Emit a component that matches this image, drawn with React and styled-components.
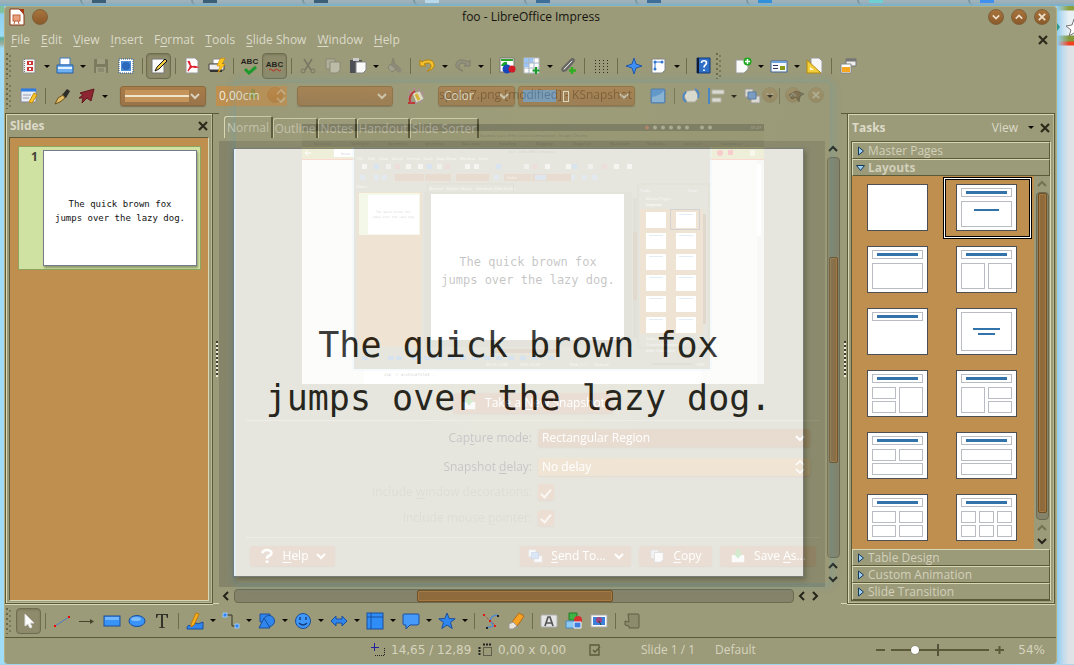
import React from "react";
import styled, { createGlobalStyle, css } from "styled-components";

const c = {
  base: "#9b9a79",
  dark: "#5b5938",
  light: "#d9d8b4",
  text: "#dcdac8",
  orange: "#be8f4f",
};

const Global = createGlobalStyle`
  * { box-sizing: border-box; }
  body { margin: 0; background: #9fd4ef; }
  body, button, input, select {
    font-family: "Open Sans", "Noto Sans", sans-serif;
    font-size: 12px;
    line-height: 16px;
    color: ${c.text};
  }
  button, select, input { margin: 0; padding: 0; border: 0; background: none; }
  h2, p { margin: 0; padding: 0; }
  svg { display: block; flex: none; }
  a { color: inherit; text-decoration: none; }
`;

/* ---------- desktop behind the window ---------- */
const Desktop = styled.div`
  display: flex;
  flex-direction: column;
  min-height: 100vh;
  padding-bottom: 2px;
  background: linear-gradient(90deg, #9fd4ef 0, #9fd4ef 80%, #aed6ea 100%);
`;
const BackTabs = styled.div`
  display: flex;
  height: 6px;
  padding: 0 20px 0 80px;
  background: linear-gradient(#a3b3ba 0, #94aeb9 60%, #6db4d6 100%);
`;
const BackTab = styled.div`
  width: 111px;
  flex: none;
  height: 5px;
  padding-left: 10px;
  border-left: 2px solid #7b97a4;
  border-radius: 0 0 0 6px;
  &::before { content: ""; display: block; width: 14px; height: 3px; background: ${(p) => p.$mark}; }
`;
const Middle = styled.div` display: flex; flex: 1; `;
const LeftEdge = styled.div`
  width: 4px;
  background: linear-gradient(#7fc09a 0, #7fc09a 6px, #8fd0f0 8px, #9adcf6 30px, #5fae9a 32px, #9ab0a0 38px, #9fdcf8 42px);
`;
const RightEdge = styled.div`
  width: 17px;
  padding-top: 11px;
  background:
    linear-gradient(90deg, #8fcdf0 0, rgba(160, 210, 240, 0.5) 6px, transparent 12px),
    linear-gradient(#8da03c 0, #8da03c 4px, #e9f1f4 5px, #e9f1f4 29px, #84993a 30px, #84993a 35px, #f04020 36px, #f04020 39px, #dfe3e8 40px);
`;

/* ---------- window frame ---------- */
const Window = styled.div`
  position: relative;
  display: flex;
  flex-direction: column;
  flex: 1;
  min-width: 0;
  background: ${c.base};
  border: 1px solid #b3ae80;
  border-width: 1px 1px 0 1px;
  border-radius: 4px;
`;
const TitleBar = styled.header`
  display: flex;
  align-items: center;
  gap: 7px;
  height: 20px;
  padding: 0 6px 0 4px;
`;
const Title = styled.div`
  flex: 1;
  text-align: center;
  color: #15150f;
  padding-left: 26px;
`;
const RoundButton = styled.button`
  display: grid;
  place-items: center;
  width: 16px;
  height: 16px;
  border-radius: 8px;
  background: linear-gradient(#a8743d, #8a5a2a);
  border: 1px solid #806038;
`;
const MenuBar = styled.nav`
  display: flex;
  align-items: center;
  height: 26px;
  padding: 0 8px 0 6px;
  gap: 11px;
`;
const Key = styled.span` text-decoration: underline; text-underline-offset: 2px; `;
const Spacer = styled.div` flex: 1; `;
const IconButton = styled.button` display: grid; place-items: center; `;

/* ---------- toolbars ---------- */
const Toolbar = styled.div`
  display: flex;
  align-items: center;
  height: ${(p) => p.$h}px;
  flex: none;
`;
const Grip = styled.div`
  flex: none;
  width: ${(p) => (p.$wide ? 15 : 11)}px;
  height: 26px;
  background:
    radial-gradient(circle at 1px 1px, #6b694c 1px, transparent 1px) 1px 0 / 4px 5px repeat-y,
    radial-gradient(circle at 1px 1px, #7b795a 1px, transparent 1px) 4px 2px / 4px 5px repeat-y;
`;
const Slot = styled.button`
  display: grid;
  place-items: center;
  flex: none;
  width: 25px;
  height: 26px;
  opacity: ${(p) => (p.$faded ? 0.4 : 1)};
  ${(p) => p.$on && css`
    background: #8d8b6b;
    border: 1px solid #6f6d50;
    border-radius: 4px;
    box-shadow: inset 0 1px 2px #7a785a;
  `}
`;
const ArrowSlot = styled.button`
  display: grid;
  place-items: center;
  flex: none;
  width: 11px;
  height: 26px;
  &::before {
    content: "";
    border: 3px solid transparent;
    border-top-color: #0a0a05;
    border-bottom: 0;
  }
`;
const Separator = styled.div`
  flex: none;
  width: 8px;
  height: 16px;
  &::before { content: ""; display: block; width: 1px; height: 16px; margin-left: 4px; background: #6f6d4d; }
`;
const Fields = styled.div`
  display: flex;
  align-items: center;
  gap: ${(p) => p.$gap || 10}px;
  padding: 0 10px;
`;
const Combo = styled.label`
  position: relative;
  display: flex;
  align-items: center;
  width: ${(p) => p.$w}px;
  height: 20px;
  border-radius: 3px;
  border: 1px solid #8c683a;
  background: linear-gradient(#a87c49, #99744a);
  box-shadow: 0 1px 1px #77735a;
  select { appearance: none; width: 100%; height: 18px; padding-left: 5px; color: #eeeadc; }
  svg { position: absolute; right: 5px; }
`;
const Swatch = styled.span`
  position: absolute;
  left: 4px;
  width: ${(p) => p.$w}px;
  height: 12px;
  background: ${(p) => p.$fill};
`;
const Tofu = styled.span`
  position: absolute;
  left: 44px;
  width: 6px;
  height: 11px;
  border: 1px solid #f0ecd8;
`;
const Spin = styled.label`
  display: flex;
  align-items: center;
  width: 71px;
  height: 20px;
  background: ${c.orange};
  input { width: 60px; padding-left: 3px; color: #f0ecdf; }
`;

/* ---------- body ---------- */
const Body = styled.div` display: flex; flex: 1; min-height: 490px; padding-right: 1px; `;
const Panel = styled.section`
  display: flex;
  flex-direction: column;
  flex: none;
  width: ${(p) => p.$w}px;
  padding: 0 3px 2px 3px;
  border: 1px solid ${c.dark};
  box-shadow: inset 1px 1px 0 ${c.light}, inset -1px -1px 0 #b9b892, 0 1px 0 ${c.light};
`;
const PanelHead = styled.div`
  display: flex;
  align-items: center;
  gap: 4px;
  height: ${(p) => p.$h}px;
  flex: none;
  padding: 0 1px;
`;
const PanelTitle = styled.h2` flex: 1; font: 700 12px/16px "Open Sans", sans-serif; `;
const ViewMenu = styled.button` padding-right: 3px; `;
const SlideList = styled.div`
  flex: 1;
  padding: 8px 8px;
  background: ${c.orange};
  border: 1px solid ${c.dark};
  border-color: ${c.dark} ${c.light} ${c.light} ${c.dark};
`;
const SlideItem = styled.button`
  display: flex;
  width: 183px;
  height: 124px;
  padding: 3px 3px 3px 12px;
  background: #d0e2a2;
  border: 1px solid #8fa35f;
  text-align: left;
`;
const SlideNumber = styled.span` width: 12px; flex: none; line-height: 14px; font-weight: 700; color: #45433a; `;
const SlidePreview = styled.span`
  flex: 1;
  height: 116px;
  padding-top: 46px;
  background: #fff;
  border: 1px solid #777a8a;
  box-shadow: 1px 2px 2px #8a9a68;
  font: 9px/14px "DejaVu Sans Mono", monospace;
  text-align: center;
  color: #111;
  white-space: pre-line;
`;
const Splitter = styled.div`
  display: flex;
  flex-direction: column;
  justify-content: center;
  flex: none;
  width: 6px;
  border-top: 1px solid ${c.dark};
  border-bottom: 1px solid ${c.light};
  &::before {
    content: "";
    width: 2px;
    height: 36px;
    margin-left: 3px;
    background: repeating-linear-gradient(#3f3e2c 0, #3f3e2c 2px, #eeedda 2px, #eeedda 4px);
  }
`;
const Center = styled.main` display: flex; flex: 1; flex-direction: column; min-width: 0; `;
const Tabs = styled.div`
  display: flex;
  align-items: flex-end;
  height: 28px;
  padding: 0 5px 3px 5px;
`;
const Tab = styled.button`
  width: ${(p) => p.$w}px;
  height: ${(p) => (p.$active ? 22 : 20)}px;
  color: #d0ceba;
  white-space: nowrap;
  text-align: center;
  border: 1px solid ${c.light};
  border-right: 2px solid #4a482c;
  border-bottom: 0;
  border-radius: 3px 2px 0 0;
`;
const Work = styled.div` display: flex; flex: 1; `;
const Canvas = styled.div`
  display: flex;
  flex: 1;
  padding: 7px 21px 10px 14px;
  background: #86856a;
`;
const Slide = styled.div`
  flex: 1;
  display: flex;
  align-items: center;
  justify-content: center;
  padding-top: 18px;
  background: #fff;
  border: 1px solid #6f7478;
  box-shadow: 2px 3px 5px #5d5c44;
`;
const SlideText = styled.p`
  font: 35px/53px "DejaVu Sans Mono", monospace;
  color: #000;
  text-align: center;
  white-space: pre;
`;
const VBar = styled.div`
  display: flex;
  flex-direction: column;
  align-items: center;
  width: 16px;
  flex: none;
  padding: 3px 0;
  background: ${c.base};
  gap: 3px;
`;
const VTrack = styled.div`
  display: flex;
  flex-direction: column;
  flex: 1;
  width: 13px;
  padding: 0 1px;
  border: 1px solid #6c6a50;
  border-radius: 4px;
  background: #85846a;
`;
const thumb = css`
  border: 1px solid #6f5026;
  border-radius: 2px;
  background: #8f6b3c;
  box-shadow: inset 0 0 0 1px #a67a42;
`;
const VThumb = styled.div`
  ${thumb}
  flex: ${(p) => p.$size};
`;
const VRest = styled.div` flex: ${(p) => p.$size}; `;
const HBar = styled.div`
  display: flex;
  align-items: center;
  height: 17px;
  flex: none;
  padding: 0 21px 0 2px;
  gap: 3px;
`;
const HTrack = styled.div`
  display: flex;
  flex: 1;
  height: 14px;
  border: 1px solid #6c6a50;
  border-radius: 4px;
  background: #85846a;
`;
const HThumb = styled.div` ${thumb} flex: 194; `;
const HRest = styled.div` flex: ${(p) => p.$size}; `;

const Accordion = styled.div`
  display: flex;
  flex-direction: column;
  flex: 1;
  border: 1px solid ${c.dark};
  border-right-color: ${c.light};
`;
const Section = styled.button`
  display: flex;
  align-items: center;
  flex: none;
  gap: 3px;
  height: 17px;
  padding-left: 3px;
  text-align: left;
  border: 1px solid ${c.light};
  border-right-color: ${c.dark};
  border-bottom-color: ${c.dark};
  color: #d2d0ba;
  font-weight: ${(p) => (p.$open ? 700 : 400)};
`;
const LayoutArea = styled.div` display: flex; flex: 1; background: ${c.orange}; `;
const LayoutGrid = styled.div`
  display: grid;
  grid-template-columns: 89px 89px;
  grid-auto-rows: 62px;
  padding: 1px 0 0 2px;
  flex: 1;
`;
const LayoutCell = styled.button`
  display: flex;
  align-items: flex-start;
  padding: ${(p) => (p.$on ? "4px 0 0 10px" : "7px 0 0 13px")};
  ${(p) => p.$on && css`
    border: 3px double #000;
    background: linear-gradient(${c.orange}, ${c.orange}) padding-box, #fff border-box;
  `}
`;

/* ---------- status bar ---------- */
const Status = styled.footer`
  display: flex;
  align-items: center;
  height: 27px;
  flex: none;
  border-top: 1px solid ${c.dark};
  padding: 0 11px 3px 0;
  color: #d6d4be;
`;
const StatusCell = styled.div`
  display: flex;
  align-items: center;
  gap: 6px;
  width: ${(p) => p.$w}px;
  font-family: ${(p) => (p.$num ? '"DejaVu Sans", sans-serif' : "inherit")};
  white-space: nowrap;
`;
const Zoom = styled.input`
  appearance: none;
  width: 98px;
  height: 12px;
  margin: 0 6px;
  background:
    linear-gradient(#55533a, #55533a) 46px 0 / 2px 12px no-repeat,
    linear-gradient(#5b5938, #5b5938) 0 5px / 100% 2px no-repeat;
  &::-webkit-slider-thumb {
    appearance: none;
    width: 8px;
    height: 8px;
    border-radius: 4px;
    background: #fff;
    box-shadow: 0 0 1px #333;
  }
`;

/* ---------- fading snapshot dialog ---------- */
const Ghost = styled.div`
  position: absolute;
  left: 231px;
  right: 226px;
  top: 76px;
  height: 500px;
  padding: 0 10px;
  opacity: 0.25;
  pointer-events: none;
  background: radial-gradient(ellipse at 50% 0, #a8a57c, #9b9a79 60%);
  border-radius: 5px;
  box-shadow: 0 0 8px 3px #4fa3c0;
`;
const GhostTitle = styled.div`
  display: flex;
  align-items: center;
  gap: 7px;
  height: 24px;
  margin-right: -4px;
  color: #000;
`;
const GhostPreview = styled.div` display: flex; justify-content: center; padding-top: 17px; `;
const GhostRow = styled.div`
  display: grid;
  grid-template-columns: 286px 272px;
  gap: 6px;
  align-items: center;
  height: ${(p) => p.$h}px;
`;
const GhostLabel = styled.label` text-align: right; color: ${(p) => (p.$dim ? "#76735a" : "#15181c")}; `;
const GhostField = styled.div`
  position: relative;
  display: flex;
  align-items: center;
  height: 18px;
  border-radius: 3px;
  background: ${(p) => p.$fill};
  box-shadow: 0 1px 2px #85684a;
  select, input { appearance: none; width: 100%; height: 18px; padding-left: 4px; color: #fff; }
  svg { position: absolute; right: 5px; }
`;
const GhostCheck = styled.input`
  appearance: none;
  display: grid;
  place-items: center;
  width: 16px;
  height: 16px;
  border-radius: 3px;
  background: #b27b4d;
  box-shadow: 0 1px 2px #85684a;
  &::before {
    content: "";
    width: 4px;
    height: 9px;
    border: solid #e8dccc;
    border-width: 0 2px 2px 0;
    transform: rotate(40deg);
  }
`;
const GhostButtons = styled.div`
  display: flex;
  gap: 8px;
  height: 37px;
  align-items: center;
  justify-content: ${(p) => p.$center ? "center" : "flex-start"};
  border-bottom: ${(p) => (p.$center ? "1px solid #b8b79c" : "0")};
  border-top: ${(p) => (p.$center ? "0" : "1px solid #b8b79c")};
  padding: ${(p) => (p.$center ? "2px 4px 0" : "0 4px")};
`;
const GhostButton = styled.button`
  display: flex;
  align-items: center;
  justify-content: center;
  gap: 8px;
  width: ${(p) => p.$w}px;
  height: 20px;
  border-radius: 3px;
  background: #a97b50;
  color: #fff;
  box-shadow: 0 1px 2px #85684a;
  white-space: nowrap;
`;

/* ---------- icons ---------- */
const B = "#2f86ee", BS = "#1a4f9e";
const art = {
  doc: <><path d="M3 2h12v14H3z" fill="#f4f4f4" stroke="#8a8a80" /><path d="M4.500 2v14" stroke="#777" strokeDasharray="1 1" /><rect x="7" y="4" width="6" height="4" fill="#c33" /><rect x="7" y="10" width="6" height="4" fill="#c33" /><path d="M9 6h2M9 12h2" stroke="#fff" strokeWidth="2" /></>,
  print: <><path d="M4 1h10v7H4z" fill="#fff" stroke="#3c78c0" /><path d="M1 8h16v8H1z" fill="#6fb0f2" stroke="#245ea8" /><path d="M2 11h14" stroke="#e5f2ff" strokeWidth="2" /></>,
  save: <><path d="M2 2h13l1 1v13H2z" fill="#4e4d3c" /><path d="M5 2h8v5H5zM4 10h10v6H4z" fill="#a6a58c" /><path d="M6 12h6M6 14h6" stroke="#4e4d3c" /></>,
  stamp: <><rect x="3" y="3" width="12" height="12" fill="#4a8edb" stroke="#fff" strokeWidth="2" /><rect x="2" y="2" width="14" height="14" fill="none" stroke="#205090" strokeDasharray="1 1" /><circle cx="9" cy="9" r="4" fill="#2b68ba" /></>,
  edit: <><path d="M2 2h12v14H2z" fill="#fafafa" stroke="#777" /><path d="m5 14 2-4 8-8 2 2-8 8z" fill="#f0cd45" stroke="#111" /></>,
  pdf: <><path d="M3 1h9l3 3v12H3z" fill="#fff" stroke="#999" /><path d="M5 4c2 5 4 7 9 6C9 8 7 11 5 14 8 10 8 7 6 4" fill="none" stroke="#e02030" strokeWidth="1.300" /></>,
  prints: <><path d="M5 2h8v5H5z" fill="#fff" stroke="#888" /><path d="M1 7h15v6H1z" fill="#eee" stroke="#444" /><path d="M2 14h12" stroke="#333" strokeWidth="2" /><path d="m12 2 5-1-3 6h3l-7 9 2-7H9z" fill="#ffc81e" stroke="#d88c00" strokeWidth=".6" /></>,
  spell: <path d="m4 9 4 4 7-6" fill="none" stroke="#1d9a2c" strokeWidth="3" />,
  auto: <path d="M3 14q1.500-2 3 0t3 0 3 0 3 0" fill="none" stroke="#c2281e" />,
  cut: <><path d="M5 2 12 13M13 2 6 13" stroke="#444" strokeWidth="1.500" /><circle cx="4" cy="14" r="2" fill="none" stroke="#444" /><circle cx="14" cy="14" r="2" fill="none" stroke="#444" /></>,
  copy: <><path d="M2 2h9v10H2z" fill="#ccc" stroke="#777" /><path d="M6 5h10v8l-3 3H6z" fill="#eee" stroke="#777" /></>,
  paste: <><path d="M1 3h12v13H1z" fill="#4e5055" /><path d="M4 1h6v3H4z" fill="#ccc" /><path d="M7 5h10v8l-3 3H7z" fill="#fafafa" stroke="#888" /></>,
  brush: <><path d="m8 1 2 6 5 4-3 2-6-3z" fill="#777" stroke="#666" /><path d="m5 7 6 5-4 3-4-4z" fill="#aaa" stroke="#666" /><circle cx="14" cy="13" r="2.500" fill="#777" /></>,
  undo: <path d="M2 3v6h6L6 7c4-2 7-1 7 2 0 2-2 4-4 5 5-1 8-4 7-7C15 2 8 2 4 5z" fill="#f2c230" stroke="#b88205" />,
  redo: <path d="M16 3v6h-6l2-2C8 5 5 6 5 9c0 2 2 4 4 5C4 13 1 10 2 7 3 2 10 2 14 5z" fill="#888" stroke="#555" />,
  chart: <><path d="M2 1h14v14H2z" fill="#fff" stroke="#777" /><path d="M3 2h12v2H3z" fill="#2ba22d" /><path d="M3 9h6V5a5 5 0 0 0-6 4z" fill="#19a52b" /><circle cx="9" cy="12" r="4.500" fill="#1746bd" /><circle cx="14" cy="12" r="3.500" fill="#d31a28" /></>,
  table: <><path d="M1 1h15v15H1z" fill="#fff" stroke="#b8bfc8" /><path d="M1 1h9v5H6v4H1z" fill="#9cc4f4" /><path d="M6 1v15M11 1v15M1 6h15M1 11h15" stroke="#a8b4c2" /><path d="M13 10v7M9.500 13.500h7" stroke="#189d28" strokeWidth="2" /></>,
  link: <><path d="m4 11 8-8c2-2 4 0 2 2l-7 8c-3 2-5 0-3-2z" fill="none" stroke="#666" strokeWidth="2" /><path d="m5 12 8-8" stroke="#ddd" /><path d="M13 10v7M10 13.500h7" stroke="#30b020" strokeWidth="2.500" /></>,
  grid: <g fill="#2d2d20">{[3, 6, 9, 12, 15].map((y) => [3, 7, 11, 15].map((x) => <rect key={x + "-" + y} x={x} y={y} width="1" height="1" />))}</g>,
  nav: <path d="m9 1 2 6 6 2-6 2-2 6-2-6-6-2 6-2z" fill="#3f90f2" stroke="#2458a8" />,
  zoomdoc: <><path d="M2 2h13v11l-3 3H2z" fill="#fff" stroke="#888" /><path d="M5 5h7M5 5v8" stroke="#2e78cf" /><circle cx="5" cy="5" r="1.500" fill="#2e78cf" /><circle cx="12" cy="5" r="1.500" fill="#2e78cf" /><circle cx="5" cy="12" r="1.500" fill="#2e78cf" /></>,
  help: <><path d="M3 1h13v15H3z" fill="#2e6fc8" stroke="#153a78" /><path d="M4 1v15" stroke="#111b33" strokeWidth="2" /><path d="M7.500 6c0-3 5-3 5 0 0 2-2.500 2-2.500 4.500M10 12.500V14" fill="none" stroke="#fff" strokeWidth="1.700" /></>,
  question: <path d="M4 6c0-5 10-5 10 0 0 3-5 2-5 6M9 14v3" fill="none" stroke="#fff" strokeWidth="3" />,
  newslide: <><path d="M2 3h12v9l-4 4H2z" fill="#fafafa" stroke="#999" /><circle cx="13.500" cy="4.500" r="4" fill="#20a820" /><path d="M13.500 2v5M11 4.500h5" stroke="#fff" strokeWidth="1.500" /></>,
  snap: <><path d="M2 8h14v8H2z" fill="#eee" /><path d="M7 1h4v5h3l-5 6-5-6h3z" fill="#4fb040" /></>,
  layout: <><path d="M1 4h16v11H1z" fill="#f4f8fc" stroke="#40669a" /><path d="M2 5h14" stroke="#6ea2dc" strokeWidth="2" /><path d="M3 8.500h5M3 11.500h5" stroke="#335" /><rect x="10" y="9" width="5" height="4" fill="#8c9c18" /></>,
  design: <><path d="M5 1h8l3 3v12H5z" fill="#f7f7f7" stroke="#999" /><path d="M1 3v13h14z" fill="#f2ce3c" stroke="#b68a08" /><path d="M4 10v3h4z" fill="#fff8d8" /></>,
  wins: <><path d="M7 2h10v7H7z" fill="#eee" stroke="#777" /><path d="M7 3h10" stroke="#777" strokeWidth="3" /><path d="M2 7h10v9H2z" fill="#fff" stroke="#888" /><path d="M3 10h8v5H3z" fill="#f8a520" /></>,
  area: <><path d="M1 2h15v13H1z" fill="#e8eef6" stroke="#889" /><path d="M1 3h15" stroke="#2e7de0" strokeWidth="3" /><path d="M3 8h8M3 11h6" stroke="#99a" /><path d="m9 15 5-9 3 2-5 8z" fill="#f6c62c" stroke="#c28c10" /></>,
  pen: <><path d="m9 8 5-6 3 2-4 7z" fill="#2c2c28" /><path d="m10 8-5 3-3 6 5-2 5-4z" fill="#e5be62" stroke="#6b5222" /></>,
  arrowred: <path d="m16 2-3 12-4-3-5 5 1-5-4 0 4-3-3-2z" fill="#8d2630" stroke="#641820" />,
  bucket: <><circle cx="9" cy="9" r="7" fill="none" stroke="#c87ab0" strokeWidth="2" strokeDasharray="2 3" /><path d="m5 6 8-2 4 8-8 4z" fill="#f3efdc" stroke="#999" /><path d="m9 7 3 6" stroke="#e8b820" strokeWidth="3" /><path d="M1 16h7M3 15c-1-5 2-9 5-11" fill="none" stroke="#c31c22" strokeWidth="2" /></>,
  grad: <><rect x="2" y="2" width="14" height="14" rx="1" fill="#4d96e4" stroke="#3a70b4" /><path d="M3 10q7-1 12-6v11H3z" fill="#a9d0f6" opacity=".6" /></>,
  rotate: <><path d="m5 4 8-1 4 7-4 5-8 0-3-6z" fill="#ededea" stroke="#aaa" /><path d="M4 5q-4 3-2 8l2 2M13 2q5 3 3 9" fill="none" stroke="#2f7ee0" strokeWidth="1.800" /></>,
  align: <><path d="M2 1v16" stroke="#2f7ee0" strokeWidth="2" /><path d="M5 3h12v4H5zM5 11h9v4H5z" fill="#eee" stroke="#bbb" /></>,
  arrange: <><path d="M2 2h8v8H2z" fill="#eee" stroke="#999" /><path d="M8 9h9v7H8z" fill="#eee" stroke="#999" /><path d="M5 5h8v7H5z" fill="#6f9ddb" stroke="#4870b0" /></>,
  ext: <path d="M2 8l7-4 8 3-4 2-1 6-3-5-4 2z" fill="#7a7860" stroke="#63624b" />,
  select: <path d="m5 2 9 9-4 0 2 4-2 1-2-4-3 2z" fill="#fff" stroke="#ddd" />,
  line: <><path d="M2 14 16 5" stroke="#4d7cc4" /><path d="M1 13h2v2H1zM15 4h2v2h-2z" fill="#f00000" /></>,
  arrow: <><path d="M1 9.500h13" stroke="#44432c" /><path d="m12 7 4 2.500-4 2.500z" fill="#44432c" /></>,
  rect: <><rect x="1" y="4" width="16" height="10" fill="#3a94f7" stroke={BS} /><path d="M2 5h14v3H2z" fill="#74b6fc" /></>,
  ellipse: <><ellipse cx="9" cy="9" rx="8" ry="5.500" fill="#3a94f7" stroke={BS} /><ellipse cx="8" cy="7" rx="5" ry="2" fill="#7ebdfc" /></>,
  text: <path d="M3 2h12v4h-1l-1-3h-3v12l2 .5v.500H6v-.500L8 15V3H5L4 6H3z" fill="#33332a" />,
  curve: <><path d="M1 17c0-8 6 1 8-6q3 2 8-1v7z" fill={B} stroke={BS} /><path d="m5 12 5-11 3 1-5 11-3 2z" fill="#f8b21f" stroke="#c17808" /></>,
  connector: <><path d="M3 3h7v11h5" fill="none" stroke="#33332a" /><path d="M1 1h4v4H1zM13 12h4v4h-4z" fill={B} stroke="#9dcaff" /></>,
  shapes: <><path d="M2 2h10v8H2z" fill={B} stroke={BS} /><circle cx="11" cy="9" r="5.500" fill={B} stroke={BS} /><path d="m6 6 6 10H1z" fill={B} stroke={BS} /></>,
  smile: <><circle cx="9" cy="9" r="7.500" fill="#3f97f8" stroke={BS} /><path d="M6 5v3M12 5v3M5 11q4 4 8 0" fill="none" stroke="#143c80" strokeWidth="1.400" /></>,
  both: <path d="m1 9 5-5v3h6V4l5 5-5 5v-3H6v3z" fill={B} stroke={BS} />,
  flow: <><rect x="1" y="1" width="16" height="16" fill="#2f8df8" stroke={BS} /><path d="M5 1v16M1 5h16" stroke={BS} /></>,
  call: <path d="M2 2h14q1 0 1 1v8q0 2-2 2H8l-4 4v-4H2q-1 0-1-2V3q0-1 1-1z" fill="#459afa" stroke={BS} />,
  star: <path d="m9 1 2.200 5.500 6 .3-4.700 3.700 1.700 6L9 13l-5.200 3.500 1.700-6L.8 6.800l6-.3z" fill={B} stroke={BS} />,
  points: <><path d="M5 15q10 1 3-6 1-6 8-6" fill="none" stroke="#508bd0" strokeWidth="1.500" /><path d="M2 3 14 14" stroke="#b93838" strokeDasharray="2 2" /><path d="M1 2h2v2H1zM7 8h2v2H7zM12 13h2v2h-2z" fill="#e01818" /><path d="M4 15h2v2H4zM15 3h2v2h-2z" fill="#222" /></>,
  pencil: <><path d="m5 10 7-9 5 3-6 9-6 3z" fill="#f8a324" stroke="#b86b10" /><path d="m2 12 4-2 4 4-4 3H2z" fill="#e8e4dc" stroke="#999" /></>,
  fontwork: <><rect x="1" y="3" width="16" height="12" rx="1" fill="#e5e5e5" stroke="#b0b0b0" /><path d="m5 14 3-9h2l3 9M6.500 11h5" fill="none" stroke="#555" strokeWidth="1.700" /></>,
  gallery: <><path d="M4 1h8v7H4z" fill="#3fb446" stroke="#1f7c28" /><circle cx="13" cy="8" r="4" fill="#d63030" /><path d="M1 9h8v7H1z" fill="#8cc8f4" stroke="#4a88c0" /><path d="M9 10h7v6H9z" fill="#3d7ede" stroke="#fff" /></>,
  picture: <><rect x="1" y="3" width="16" height="12" fill="#fff" stroke="#aaa" /><rect x="3" y="5" width="12" height="8" fill="#3c80dc" /><circle cx="9" cy="8" r="3" fill="#a2437c" /><path d="m9 9 2 4" stroke="#243" /></>,
  exit: <path d="M5 2h10q1 0 1 1v12q0 1-1 1H6v-2l-4-1V9l4 1z" fill="#8c8b6c" stroke="#605e43" />,
};
const Icon = ({ n, s = 18 }) => <svg width={s} height={s} viewBox="0 0 18 18" aria-hidden="true">{art[n]}</svg>;
const SpellMark = styled.span`
  display: flex;
  flex-direction: column;
  align-items: center;
  font: 700 8px/7px "Liberation Sans", sans-serif;
  color: #23231c;
`;
const Cross = ({ s = 10, color = "#2b2a1c" }) => (
  <svg width={s} height={s} viewBox="0 0 10 10"><path d="m1 1 8 8M9 1 1 9" stroke={color} strokeWidth="2.200" /></svg>
);
const turn = { down: "m1 3 4 4 4-4", up: "m1 7 4-4 4 4", left: "m7 1-4 4 4 4", right: "m3 1 4 4-4 4" };
const Chevron = ({ d = "down", color = "#d9d0ba", s = 10 }) => (
  <svg width={s} height={s} viewBox="0 0 10 10"><path d={turn[d]} fill="none" stroke={color} strokeWidth="2" /></svg>
);
const UpDown = ({ color = "#d3bd98" }) => (
  <svg width="10" height="16" viewBox="0 0 10 16"><path d="m1 6 4-4 4 4M1 10l4 4 4-4" fill="none" stroke={color} strokeWidth="1.500" /></svg>
);

/* Toolbar entries: "|" separator, "v" menu arrow, ":" grip, otherwise an icon name. */
const standard = "doc v print v save- stamp | edit+ | pdf prints | spell auto+ | cut- copy- paste v brush- | undo v redo- v | chart table v link | grid | nav zoomdoc v | help : newslide v layout v design | wins".split(" ");
const drawing = "select+ | line arrow rect ellipse text | curve v connector v shapes v smile v both v flow v call v star v | points pencil | fontwork gallery picture | exit".split(" ");
const Tools = ({ items }) => items.map((it, i) => {
  if (it === "|") return <Separator key={i} />;
  if (it === "v") return <ArrowSlot key={i} aria-label="More" />;
  if (it === ":") return <Grip key={i} $wide />;
  const n = it.replace(/[-+]/, "");
  return (
    <Slot key={i} aria-label={n} $on={it.endsWith("+")} $faded={it.endsWith("-")}>
      {n === "spell" && <SpellMark>ABC<svg width="18" height="10" viewBox="0 5 18 10">{art.spell}</svg></SpellMark>}
      {n === "auto" && <SpellMark>ABC<svg width="18" height="4" viewBox="0 12 18 4">{art.auto}</svg></SpellMark>}
      {n !== "spell" && n !== "auto" && <Icon n={n} />}
    </Slot>
  );
});

/* Slide layouts: content frames as [x, y, w, h]; bars as [x, y, w]. */
const T = [5, 4, 50, 8], TB = [10, 7, 41];
const layouts = [
  { f: [], b: [] },
  { f: [T, [5, 17, 50, 25]], b: [TB, [18, 25, 25]] },
  { f: [T, [5, 17, 50, 25]], b: [TB] },
  { f: [T, [5, 17, 23, 25], [32, 17, 23, 25]], b: [TB] },
  { f: [T], b: [TB] },
  { f: [[5, 4, 50, 38]], b: [[17, 20, 27], [22, 25, 17]] },
  { f: [T, [5, 17, 23, 11], [5, 31, 23, 11], [32, 17, 23, 25]], b: [TB] },
  { f: [T, [5, 17, 23, 25], [32, 17, 23, 11], [32, 31, 23, 11]], b: [TB] },
  { f: [T, [5, 17, 23, 11], [32, 17, 23, 11], [5, 31, 50, 11]], b: [TB] },
  { f: [T, [5, 17, 50, 11], [5, 31, 50, 11]], b: [TB] },
  { f: [T, [5, 17, 23, 11], [32, 17, 23, 11], [5, 31, 23, 11], [32, 31, 23, 11]], b: [TB] },
  { f: [T, ...[5, 23, 41].flatMap((x) => [[x, 17, 14, 11], [x, 31, 14, 11]])], b: [TB] },
];
const LayoutArt = ({ f, b }) => (
  <svg width="61" height="47" viewBox="0 0 61 47" shapeRendering="crispEdges">
    <rect x=".5" y=".5" width="60" height="46" fill="#fff" stroke="#4c4f54" />
    {f.map(([x, y, w, h], i) => <rect key={i} x={x + 0.5} y={y + 0.5} width={w} height={h} fill="none" stroke="#b9bcc2" />)}
    {b.map(([x, y, w], i) => <rect key={i} x={x} y={y} width={w} height={w > 40 ? 3 : 2} fill="#3273ab" />)}
  </svg>
);
const Tri = ({ open }) => (
  <svg width="9" height="10" viewBox="0 0 9 10">
    <path d={open ? "M0.500 2.500h8l-4 5z" : "M2.500 1v8l5-4z"} fill="#9fd0f2" stroke="#173a5c" />
  </svg>
);

/* The snapshot thumbnail shown inside the dialog: a small view of the whole desktop. */
const browserTabs = ["facebook", "Getting St", "fgrehm/va", "fgrehm/vs", "Base boxe", "Installing", "Blogging (", "Diago's bl", "Markdown", "Bunkalins", "perlone.li", "Example u"];
const Snapshot = () => (
  <svg width="462" height="260" viewBox="0 0 462 260" fontFamily="Open Sans, sans-serif" fontSize="4" fill="#e8e7dc">
    <rect width="462" height="260" fill="#f2f2ee" />
    <rect width="462" height="7" fill="#2e2d28" />
    <rect y="7" width="462" height="16" fill="#94926a" />
    <rect y="16" width="462" height="7" fill="#7b7a5c" />
    <g fill="#26261c">
      <text x="178" y="13">Example uses of the Linux Command zip - Google Chrome</text>
      {browserTabs.map((t, i) => <text key={t} x={12 + i * 37} y="21">{t}</text>)}
    </g>
    {[345, 353, 361, 369, 377, 385, 400, 408].map((x, i) => <circle key={x} cx={x} cy="3.500" r="2" fill={i ? "#ddd" : "#e44"} />)}
    <text x="449" y="5">01:27</text>
    <rect y="23" width="462" height="12" fill="#bcbf66" />
    <rect x="32" y="25" width="20" height="8" fill="#fff" />
    <text x="39" y="31" fill="#333">linux</text>
    <path d="M3 29h6M3 29l3-3M3 29l3 3" stroke="#fff" />
    <rect y="35" width="462" height="1" fill="#f06048" />
    <g fill="#d33"><circle cx="418" cy="29" r="3" /><rect x="426" y="26" width="5" height="5" /></g>
    <path d="M448 27h5M448 29h5M448 31h5" stroke="#fff" />
    <rect x="62" y="246" width="337" height="14" fill="#fff" />
    <text x="82" y="252" fill="#333" fontFamily="DejaVu Sans Mono, monospace">zip -r archivefile1 .</text>
    <rect x="455" y="36" width="7" height="224" fill="#e0e0dc" />
    <rect x="455" y="40" width="4" height="72" fill="#fff" />
    <rect x="50" y="23" width="360" height="224" fill="#9fd0e8" opacity=".4" />
    <rect x="52" y="23" width="356" height="222" fill={c.base} />
    <text x="207" y="29" fill="#45442f">foo - LibreOffice Impress</text>
    {["File", "Edit", "View", "Insert", "Format", "Tools", "Slide Show", "Window", "Help"].map((t, i) => <text key={t} x={[55, 66, 77, 90, 105, 121, 134, 158, 177][i]} y="36">{t}</text>)}
    <g opacity=".6">
      {[60, 72, 84, 93, 104, 116, 125, 135, 143, 163, 172, 194, 222, 230, 243, 264, 270, 286, 300, 312, 325].map((x, i) => <rect key={x} x={x} y="40" width="5" height="5" fill={["#fff", "#3f90f2", "#ddd", "#c66", "#fff"][i % 5]} />)}
      {[58, 72, 80, 192, 268, 280, 290].map((x) => <rect key={x} x={x} y="51" width="5" height="5" fill="#7cacec" />)}
    </g>
    {[[93, 29], [123, 26], [154, 33], [202, 27], [230, 39]].map(([x, w]) => <rect key={x} x={x} y="50" width={w} height="7" fill="#a37343" />)}
    <text x="205" y="55">Color</text><rect x="233" y="51" width="11" height="5" fill="#7a9ac0" />
    <text x="54" y="64">Slides</text>
    {["Normal", "Outline", "Notes", "Handout", "Slide Sorter"].map((t, i) => <text key={t} x={[127, 144, 159, 174, 192][i]} y="66">{t}</text>)}
    <path d="M125.500 68v-8h86v8" fill="none" stroke="#85845f" />
    <rect x="55" y="68" width="65" height="155" fill={c.orange} />
    <rect x="57" y="69" width="61" height="42" fill="#d0e2a2" />
    <rect x="66" y="71" width="51" height="39" fill="#fff" />
    <g fill="#555" fontFamily="DejaVu Sans Mono, monospace" fontSize="3"><text x="74" y="89">The quick brown fox</text><text x="70" y="94">jumps over the lazy dog.</text></g>
    <rect x="122" y="68" width="208" height="155" fill="#8f8e70" />
    <rect x="129" y="70" width="193" height="146" fill="#fff" />
    <g fill="#111" fontSize="12" fontFamily="DejaVu Sans Mono, monospace" textAnchor="middle"><text x="226" y="142">The quick brown fox</text><text x="226" y="160">jumps over the lazy dog.</text></g>
    <rect x="331" y="74" width="4" height="140" fill="#85846a" /><rect x="331" y="108" width="4" height="68" fill="#8f6b3c" />
    <path d="M336 60v164h71V60z" fill="none" stroke="#85845f" />
    <text x="338" y="68">Tasks</text><text x="386" y="68">View</text>
    <text x="344" y="76">Master Pages</text><text x="344" y="82" fontWeight="700">Layouts</text>
    <rect x="338" y="85" width="63" height="125" fill={c.orange} />
    <rect x="368.500" y="85.500" width="29" height="20" fill="none" stroke="#4a4a4a" />
    {[0, 1, 2, 3, 4, 5].map((r) => [0, 1].map((k) => (
      <g key={r + "-" + k}><rect x={344 + k * 30} y={88 + r * 21} width="20" height="16" fill="#fff" />{r + k > 0 && <path d={`M${347 + k * 30} ${90.5 + r * 21}h14`} stroke="#8ab0d0" />}</g>
    )))}
    <rect x="401" y="90" width="3" height="110" fill="#805e34" />
    <text x="344" y="216">Table Design</text><text x="344" y="222">Custom Animation</text><text x="344" y="228">Slide Transition</text>
    <rect x="190" y="225" width="66" height="4" fill="#8f6b3c" />
    <g opacity=".6">
      {[60, 86, 94, 110, 122, 134, 146, 158, 170, 182, 194, 206, 218, 230, 246].map((x) => <rect key={x} x={x} y="232" width="6" height="4" fill={B} />)}
    </g>
    <text x="184" y="242">20,15 / 2,84</text><text x="218" y="242">0,00 x 0,00</text>
    <text x="268" y="242">Slide 1 / 1</text><text x="293" y="242">Default</text><text x="395" y="242">54%</text>
    <path d="M350 240h40" stroke="#6b694c" />
  </svg>
);

const menus = ["File", "Edit", "View", "Insert", "Format", "Tools", "Slide Show", "Window", "Help"];

export default function App() {
  return (
    <Desktop>
      <Global />
      <BackTabs>
        {["#3c5f78", "#3c5f78", "#3c5f78", "#b9d8ea", "#3e6f9a", "#3e6f9a", "#3190dc", "#6fd0d4", "#4090f0"].map((m, i) => <BackTab key={i} $mark={m} />)}
      </BackTabs>
      <Middle>
        <LeftEdge />
        <Window>
          <TitleBar>
            <svg width="16" height="18" viewBox="0 0 16 18"><path d="M1 1h9l5 5v11H1z" fill="#fff" stroke="#8a3412" /><path d="M10 1h5v6z" fill="#a33a12" /><rect x="4" y="7" width="7" height="6" fill="#e8a080" stroke="#c0623a" /><path d="m6 13-1 3M9 13l1 3" stroke="#c0623a" /></svg>
            <RoundButton aria-label="Window menu" />
            <Title>foo - LibreOffice Impress</Title>
            <RoundButton aria-label="Minimize"><Chevron s={8} color="#f0e2cc" /></RoundButton>
            <RoundButton aria-label="Maximize"><Chevron s={8} d="up" color="#f0e2cc" /></RoundButton>
            <RoundButton aria-label="Close"><Cross s={8} color="#f0e2cc" /></RoundButton>
          </TitleBar>
          <MenuBar>
            {menus.map((m) => m === "Format"
              ? <a key={m} href="#format">F<Key>o</Key>rmat</a>
              : <a key={m} href={"#" + m}><Key>{m[0]}</Key>{m.slice(1)}</a>)}
            <Spacer />
            <IconButton aria-label="Close document"><Cross /></IconButton>
          </MenuBar>
          <Toolbar $h={26}><Grip /><Tools items={standard} /></Toolbar>
          <Toolbar $h={34}>
            <Grip />
            <Tools items={["area", "|", "pen", "arrowred", "v"]} />
            <Fields>
              <Combo $w={86}><select aria-label="Line style" /><Swatch $w={64} $fill="linear-gradient(#c4945a 5px, #efe6cc 5px, #efe6cc 7px, #c4945a 7px)" /><Chevron /></Combo>
              <Spin><input aria-label="Line width" defaultValue="0,00cm" /><UpDown /></Spin>
              <Combo $w={96}><select aria-label="Line color" /><Chevron /></Combo>
            </Fields>
            <Tools items={["bucket"]} />
            <Fields $gap={3}>
              <Combo $w={77}><select aria-label="Fill type"><option>Color</option></select><Chevron /></Combo>
              <Combo $w={117}><select aria-label="Fill color" /><Swatch $w={33} $fill="#6f9ac6" /><Tofu /><Chevron /></Combo>
            </Fields>
            <Tools items={["grad", "|", "rotate", "align", "v", "arrange", "v", "|", "ext"]} />
          </Toolbar>

          <Body>
            <Panel $w={208}>
              <PanelHead $h={23}><PanelTitle>Slides</PanelTitle><IconButton aria-label="Close slides"><Cross /></IconButton></PanelHead>
              <SlideList>
                <SlideItem><SlideNumber>1</SlideNumber><SlidePreview>{"The quick brown fox\njumps over the lazy dog."}</SlidePreview></SlideItem>
              </SlideList>
            </Panel>
            <Splitter />
            <Center>
              <Tabs>
                <Tab $w={49} $active>Normal</Tab><Tab $w={45}>Outline</Tab><Tab $w={39}>Notes</Tab><Tab $w={53}>Handout</Tab><Tab $w={69}>Slide Sorter</Tab>
              </Tabs>
              <Work>
                <Canvas><Slide><SlideText>{"The quick brown fox\njumps over the lazy dog."}</SlideText></Slide></Canvas>
                <VBar>
                  <Chevron d="up" color="#24241a" />
                  <VTrack><VRest $size={100} /><VThumb $size={206} /><VRest $size={95} /></VTrack>
                  <Chevron d="up" color="#24241a" />
                  <Chevron color="#24241a" />
                </VBar>
              </Work>
              <HBar>
                <Chevron d="left" color="#24241a" />
                <HTrack><HRest $size={183} /><HThumb /><HRest $size={181} /></HTrack>
                <Chevron d="left" color="#24241a" />
                <Chevron d="right" color="#24241a" />
              </HBar>
            </Center>
            <Splitter />
            <Panel $w={208}>
              <PanelHead $h={27}>
                <PanelTitle>Tasks</PanelTitle>
                <ViewMenu>View</ViewMenu>
                <ArrowSlot aria-label="View menu" />
                <IconButton aria-label="Close tasks"><Cross /></IconButton>
              </PanelHead>
              <Accordion>
                <Section><Tri />Master Pages</Section>
                <Section $open><Tri open />Layouts</Section>
                <LayoutArea>
                  <LayoutGrid>{layouts.map((l, i) => <LayoutCell key={i} $on={i === 1} aria-label={"Layout " + (i + 1)}><LayoutArt {...l} /></LayoutCell>)}</LayoutGrid>
                  <VBar>
                    <Chevron d="up" color="#74724f" />
                    <VTrack><VThumb $size={324} /><VRest $size={6} /></VTrack>
                    <Chevron d="up" color="#74724f" />
                    <Chevron color="#24241a" />
                  </VBar>
                </LayoutArea>
                <Section><Tri />Table Design</Section>
                <Section><Tri />Custom Animation</Section>
                <Section><Tri />Slide Transition</Section>
              </Accordion>
            </Panel>
          </Body>

          <Toolbar $h={33}><Grip /><Tools items={drawing} /></Toolbar>
          <Status>
            <Spacer />
            <StatusCell $w={107} $num>
              <svg width="14" height="14" viewBox="0 0 14 14"><path d="M0 4.500h8M3.500 0v8" stroke="#22229a" /><path d="M4 12.500h9.500V5" fill="none" stroke="#222" strokeDasharray="1 1" /></svg>
              14,65 / 12,89
            </StatusCell>
            <StatusCell $w={111} $num>
              <svg width="14" height="14" viewBox="0 0 14 14"><rect x="5.500" y="4.500" width="8" height="8" fill="none" stroke="#222" strokeDasharray="1 1" /><path d="M5 1.500h8M1.500 4v8" stroke="#222" strokeWidth="2" strokeDasharray="2 1" /></svg>
              0,00 x 0,00
            </StatusCell>
            <StatusCell $w={52}>
              <svg width="12" height="12" viewBox="0 0 12 12"><path d="M1 1h9v10H1zM4 6l2 2 5-5" fill="none" stroke="#5b5938" strokeWidth="1.300" /></svg>
            </StatusCell>
            <StatusCell $w={74}>Slide 1 / 1</StatusCell>
            <StatusCell $w={161}>Default</StatusCell>
            <svg width="9" height="12" viewBox="0 0 9 12"><path d="M0 6h9" stroke="#5b5938" strokeWidth="2" /></svg>
            <Zoom type="range" aria-label="Zoom" min="0" max="100" defaultValue="22" />
            <svg width="9" height="12" viewBox="0 0 9 12"><path d="M0 6h9M4.500 2v8" stroke="#5b5938" strokeWidth="2" /></svg>
            <StatusCell $w={41} $num><Spacer />54%</StatusCell>
          </Status>

          <Ghost>
            <GhostTitle>
              <svg width="14" height="14" viewBox="0 0 14 14"><path d="M5 1h4v5h4l-6 6-6-6h4z" fill="#1c8a2c" /></svg>
              <RoundButton aria-label="Dialog menu" />
              <Title>spam7.png [modified] - KSnapshot</Title>
              <RoundButton aria-label="Shade"><Chevron s={8} /></RoundButton>
              <RoundButton aria-label="Restore"><Chevron s={8} d="up" /></RoundButton>
              <RoundButton aria-label="Close dialog"><Cross s={8} color="#eee" /></RoundButton>
            </GhostTitle>
            <GhostPreview><Snapshot /></GhostPreview>
            <GhostButtons $center>
              <GhostButton $w={160}><Icon n="snap" s={16} /><span>Take a <Key>N</Key>ew Snapshot</span></GhostButton>
            </GhostButtons>
            <GhostRow $h={33}>
              <GhostLabel htmlFor="mode">Cap<Key>t</Key>ure mode:</GhostLabel>
              <GhostField $fill="#a37343"><select id="mode"><option>Rectangular Region</option></select><Chevron color="#fff" /></GhostField>
            </GhostRow>
            <GhostRow $h={25}>
              <GhostLabel htmlFor="delay">Snapshot <Key>d</Key>elay:</GhostLabel>
              <GhostField $fill="#c39357"><input id="delay" defaultValue="No delay" /><UpDown color="#fff" /></GhostField>
            </GhostRow>
            <GhostRow $h={26}><GhostLabel $dim htmlFor="deco">Include <Key>w</Key>indow decorations:</GhostLabel><GhostCheck id="deco" type="checkbox" defaultChecked /></GhostRow>
            <GhostRow $h={25}><GhostLabel $dim htmlFor="ptr">Include mouse <Key>p</Key>ointer:</GhostLabel><GhostCheck id="ptr" type="checkbox" defaultChecked /></GhostRow>
            <GhostRow $h={7} />
            <GhostButtons>
              <GhostButton $w={85}><Icon n="question" s={16} /><span><Key>H</Key>elp</span><Chevron color="#fff" /></GhostButton>
              <Spacer />
              <GhostButton $w={111}><Icon n="arrange" s={16} /><span><Key>S</Key>end To...</span><Chevron color="#fff" /></GhostButton>
              <GhostButton $w={73}><Icon n="copy" s={16} /><span><Key>C</Key>opy</span></GhostButton>
              <GhostButton $w={96}><Icon n="snap" s={16} /><span>Save <Key>A</Key>s...</span></GhostButton>
            </GhostButtons>
          </Ghost>
        </Window>
        <RightEdge>
          <svg width="17" height="20" viewBox="0 0 17 20"><path d="M0 6 3 10 0 14z" fill="#2c9a8a" /><path d="m17 2-2 6-6 1 5 4-2 6 5-3" fill="#fff" stroke="#777" /></svg>
        </RightEdge>
      </Middle>
    </Desktop>
  );
}
